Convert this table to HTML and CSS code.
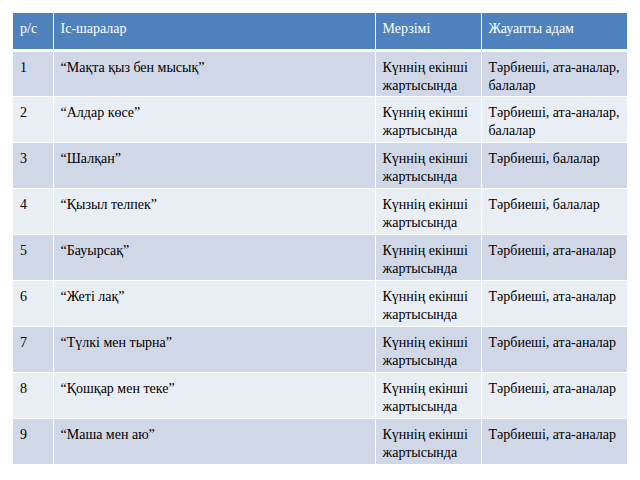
FILE: index.html
```html
<!DOCTYPE html>
<html>
<head>
<meta charset="utf-8">
<link rel="stylesheet" href="styles.css">
</head>
<body>
<table class="plan">
  <colgroup>
    <col class="c1"><col class="c2"><col class="c3"><col class="c4">
  </colgroup>
  <thead>
    <tr><th>р/с</th><th>Іс-шаралар</th><th>Мерзімі</th><th>Жауапты адам</th></tr>
  </thead>
  <tbody>
    <tr><td>1</td><td>“Мақта қыз бен мысық”</td><td>Күннің екінші жартысында</td><td>Тәрбиеші, ата-аналар, балалар</td></tr>
    <tr><td>2</td><td>“Алдар көсе”</td><td>Күннің екінші жартысында</td><td>Тәрбиеші, ата-аналар, балалар</td></tr>
    <tr><td>3</td><td>“Шалқан”</td><td>Күннің екінші жартысында</td><td>Тәрбиеші, балалар</td></tr>
    <tr><td>4</td><td>“Қызыл телпек”</td><td>Күннің екінші жартысында</td><td>Тәрбиеші, балалар</td></tr>
    <tr><td>5</td><td>“Бауырсақ”</td><td>Күннің екінші жартысында</td><td>Тәрбиеші, ата-аналар</td></tr>
    <tr><td>6</td><td>“Жеті лақ”</td><td>Күннің екінші жартысында</td><td>Тәрбиеші, ата-аналар</td></tr>
    <tr><td>7</td><td>“Түлкі мен тырна”</td><td>Күннің екінші жартысында</td><td>Тәрбиеші, ата-аналар</td></tr>
    <tr><td>8</td><td>“Қошқар мен теке”</td><td>Күннің екінші жартысында</td><td>Тәрбиеші, ата-аналар</td></tr>
    <tr><td>9</td><td>“Маша мен аю”</td><td>Күннің екінші жартысында</td><td>Тәрбиеші, ата-аналар</td></tr>
  </tbody>
</table>
</body>
</html>
```
FILE: styles.css
```css
html, body {
  margin: 0;
  padding: 0;
  background: #ffffff;
}
body {
  padding: 13px 0 0 13px;
  font-family: "Liberation Serif", "Times New Roman", serif;
  font-size: 14px;
  color: #000000;
}
.plan {
  border-collapse: collapse;
  table-layout: fixed;
  width: 614px;
}
.c1 { width: 40px; }
.c2 { width: 322px; }
.c3 { width: 106px; }
.c4 { width: 146px; }
.plan th, .plan td {
  text-align: left;
  vertical-align: top;
  padding: 7px 6px 0 7px;
  line-height: 18px;
  font-weight: normal;
  border-left: 1px solid #ffffff;
  border-right: 1px solid #ffffff;
  box-sizing: border-box;
}
.plan th {
  background: #4f81bd;
  color: #ffffff;
  height: 37px;
  border-bottom: 3px solid #ffffff;
}
.plan td {
  height: 46px;
  border-top: 1px solid #ffffff;
}
.plan tbody tr:nth-child(odd) td { background: #d0d8e8; }
.plan tbody tr:nth-child(even) td { background: #e9edf4; }
.plan th:first-child, .plan td:first-child { border-left: none; }
.plan th:last-child, .plan td:last-child { border-right: none; }
```
